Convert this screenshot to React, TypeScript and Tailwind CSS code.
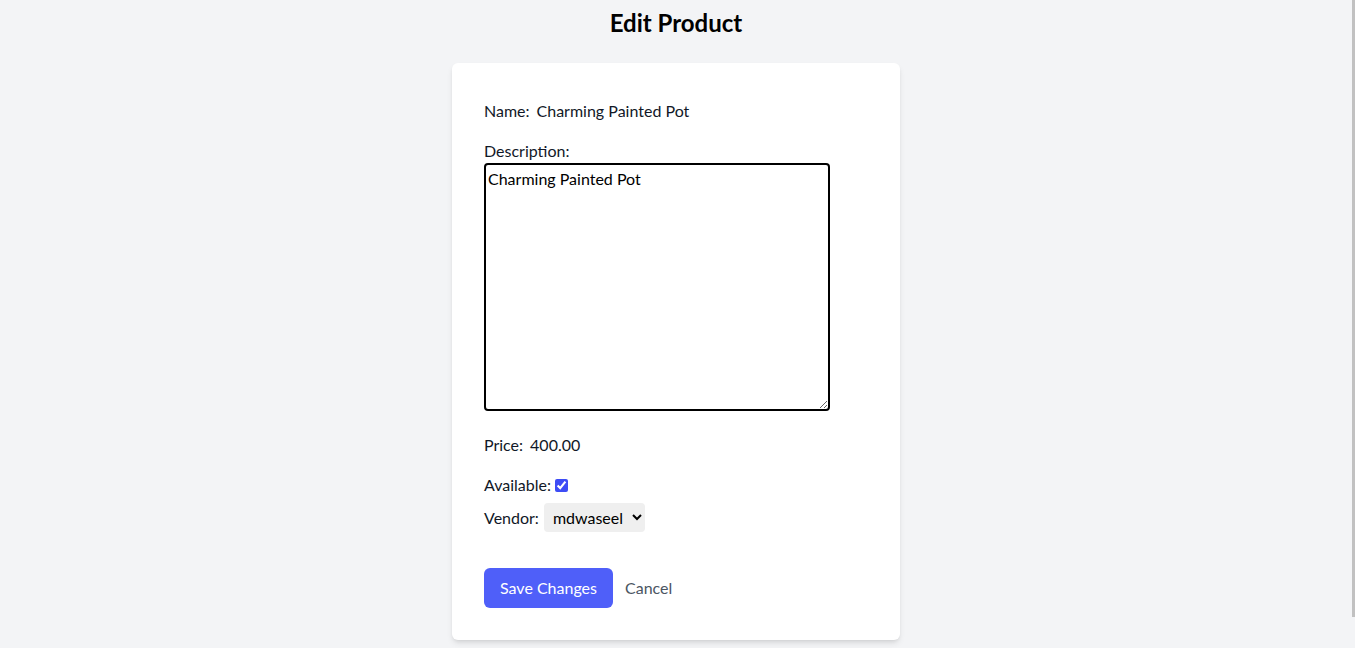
import React from "react";

const font = { fontFamily: 'Lato, sans-serif' };

export default function App() {
  return (
    <div className="flex min-h-[648px] bg-[#f3f4f6] text-[#111827]" style={font}>
      <div className="flex-1">
        <div className="ml-[438px] h-0 w-[490px] shadow-[0_1px_3px_rgba(0,0,0,0.12)]" />
        <h1 className="pt-[7px] text-center text-2xl font-bold leading-8 text-black">Edit Product</h1>
        <div className="mx-auto mt-6 w-[448px] rounded-md bg-white px-8 pb-8 pt-9 shadow-md">
          <div className="text-base leading-6">
            <span>Name:</span>
            <span className="ml-[7px]">Charming Painted Pot</span>
          </div>
          <div className="mt-4 text-base leading-6">Description:</div>
          <textarea
            defaultValue="Charming Painted Pot"
            className="block h-[248px] w-[346px] resize-y rounded border-2 border-black bg-white p-[2px] text-base leading-6 text-black outline-none"
            style={font}
          />
          <div className="mt-[22px] text-base leading-6">
            <span>Price:</span>
            <span className="ml-[7px]">400.00</span>
          </div>
          <div className="mt-4 flex items-center text-base leading-6">
            <span>Available:</span>
            <input type="checkbox" defaultChecked className="ml-[4px] h-[13px] w-[13px] accent-[#3d4cf5]" />
          </div>
          <div className="mt-[6px] flex items-center text-base leading-6">
            <span>Vendor:</span>
            <select
              defaultValue="mdwaseel"
              className="ml-[5px] h-[29px] rounded bg-[#efefef] px-[5px] text-base text-black"
              style={font}
            >
              <option value="mdwaseel">mdwaseel</option>
            </select>
          </div>
          <div className="mt-9 flex items-center">
            <button className="h-10 rounded-md bg-[#4f5ff9] px-4 text-base text-white">Save Changes</button>
            <button className="ml-3 text-base text-[#4b5563]">Cancel</button>
          </div>
        </div>
      </div>
      <div className="w-[3px] shrink-0">
        <div className="h-[617px] w-full bg-[#c1c1c1]" />
      </div>
    </div>
  );
}
